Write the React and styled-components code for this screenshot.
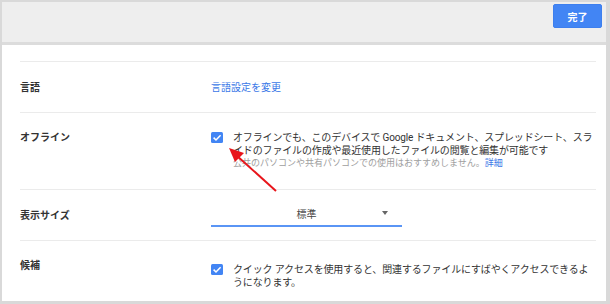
import styled, { createGlobalStyle } from "styled-components";

const GlobalStyle = createGlobalStyle`
    html, body {
        margin: 0;
        padding: 0;
    }
    body {
        font-family: "Roboto", "Noto Sans CJK JP", sans-serif;
        font-size: 10px;
        color: #333;
    }
`;

function App() {
    return (
        <>
            <GlobalStyle />
            <Frame>
                <Header>
                    <DoneButton>完了</DoneButton>
                </Header>
                <Content>
                    <Row>
                        <Label>言語</Label>
                        <Link>言語設定を変更</Link>
                    </Row>
                    <Row $top>
                        <Label>オフライン</Label>
                        <Option>
                            <Checkbox />
                            <OptionText>
                                <Main>
                                    オフラインでも、このデバイスで Google
                                    ドキュメント、スプレッドシート、スライドのファイルの作成や最近使用したファイルの閲覧と編集が可能です
                                </Main>
                                <Sub>
                                    公共のパソコンや共有パソコンでの使用はおすすめしません。
                                    <Link>詳細</Link>
                                </Sub>
                            </OptionText>
                        </Option>
                    </Row>
                    <Row>
                        <Label>表示サイズ</Label>
                        <Select>
                            標準
                            <Caret />
                        </Select>
                    </Row>
                    <Row $top $last>
                        <Label>候補</Label>
                        <Option $offset>
                            <Checkbox />
                            <OptionText>
                                <Main>
                                    クイック
                                    アクセスを使用すると、関連するファイルにすばやくアクセスできるようになります。
                                </Main>
                            </OptionText>
                        </Option>
                    </Row>
                </Content>
                <Arrow width="60" height="50" viewBox="0 0 60 50">
                    <line x1="50" y1="46" x2="10" y2="10" stroke="#e8151b" strokeWidth="2" />
                    <polygon points="3,3 18,8 9,17" fill="#e8151b" />
                </Arrow>
            </Frame>
        </>
    );
}

function Checkbox() {
    return (
        <Box>
            <svg width="12" height="11" viewBox="0 0 12 11">
                <rect width="12" height="11" rx="1.5" fill="#4285f4" />
                <path d="M2.6 5.6 L5 8 L9.6 3.2" stroke="#fff" strokeWidth="1.5" fill="none" />
            </svg>
        </Box>
    );
}

export default App;

const Frame = styled.div`
    position: relative;
    width: 610px;
    height: 304px;
    box-sizing: border-box;
    padding: 2px 4px 3px 2px;
    background: #d9d9d9;
    display: flex;
    flex-direction: column;
`;

const Header = styled.div`
    height: 43px;
    background: #eeeeee;
    border-bottom: 3px solid #dcdcdc;
    display: flex;
    justify-content: flex-end;
    align-items: flex-start;
    padding: 2px 4px 0 0;
    box-sizing: border-box;
    flex-shrink: 0;
`;

const DoneButton = styled.button`
    width: 49px;
    height: 24px;
    border: 1px solid #3d7fee;
    border-radius: 2px;
    background: #4285f4;
    color: #fff;
    font-family: "Roboto", "Noto Sans CJK JP", sans-serif;
    font-size: 10px;
    font-weight: 700;
    padding: 0;
`;

const Content = styled.div`
    flex: 1;
    background: #fff;
    padding: 16px 10px 0 18px;
    overflow: hidden;
`;

const Row = styled.div`
    display: flex;
    align-items: ${(p) => (p.$top ? "flex-start" : "center")};
    border-top: 1px solid #ebebeb;
    padding: ${(p) => (p.$top ? "18px 0 19px" : "0")};
    box-sizing: border-box;
    ${(p) => (!p.$top ? "height: 51px;" : "")}
`;

const Label = styled.div`
    width: 191px;
    flex-shrink: 0;
    font-weight: 700;
    color: #333;
    line-height: 13px;
`;

const Link = styled.span`
    color: #3b78e7;
    line-height: 13px;
`;

const Option = styled.div`
    display: flex;
    gap: 10px;
    padding-top: ${(p) => (p.$offset ? "4px" : "0")};
    flex: 1;
`;

const Box = styled.div`
    width: 12px;
    height: 11px;
    margin-top: 1px;
    flex-shrink: 0;
    display: flex;
`;

const OptionText = styled.div`
    flex: 1;
`;

const Main = styled.div`
    line-height: 13px;
    color: #333;
    letter-spacing: -0.15px;
`;

const Sub = styled.div`
    line-height: 13px;
    font-size: 9px;
    color: #9e9e9e;
`;

const Select = styled.div`
    position: relative;
    width: 191px;
    height: 26px;
    box-sizing: border-box;
    border-bottom: 2px solid #5a95f5;
    display: flex;
    align-items: center;
    justify-content: center;
    color: #444;
    margin-top: -2px;
`;

const Caret = styled.span`
    position: absolute;
    right: 14px;
    top: 10px;
    width: 0;
    height: 0;
    border-left: 3.5px solid transparent;
    border-right: 3.5px solid transparent;
    border-top: 4px solid #666;
`;

const Arrow = styled.svg`
    position: absolute;
    left: 226px;
    top: 145px;
`;
